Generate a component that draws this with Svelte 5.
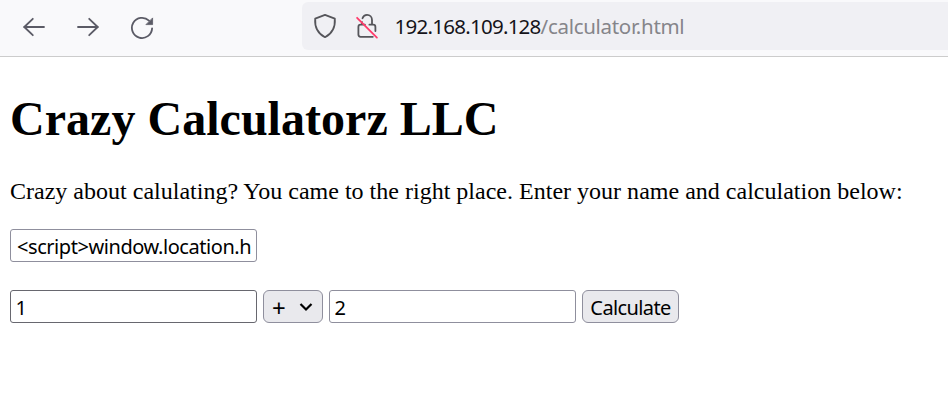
<script>
  let name = $state('<' + 'script>window.location.h');
  let first = $state('1');
  let second = $state('2');
</script>

<div class="window">
  <header class="toolbar">
    <nav class="nav">
      <svg width="24" height="24" viewBox="0 0 24 24" aria-label="Back"><path d="M22 12H2M10.8 3.8 2.3 12l8.5 8.2" /></svg>
      <svg width="24" height="24" viewBox="0 0 24 24" aria-label="Forward"><path d="M2 12h20M13.2 3.8l8.5 8.2-8.5 8.2" /></svg>
      <svg width="24" height="24" viewBox="0 0 24 24" aria-label="Reload">
        <path d="M22.1 13.4A10.1 10.1 0 1 1 19 5.6" />
        <path class="solid" d="M22.6 3.3v6.3h-6.3z" />
      </svg>
    </nav>
    <div class="urlbar">
      <svg width="24" height="26" viewBox="0 0 24 26" aria-label="Protection"><path d="M12 1.9 21.8 5.6C22.4 13.5 19.8 20.2 12 24.2 4.2 20.2 1.6 13.5 2.2 5.6Z" /></svg>
      <svg class="lock" width="24" height="26" viewBox="0 0 24 26" aria-label="Connection not secure">
        <path d="M7.5 5.2C8.3 3 9.8 1.9 12 1.9c3 0 5 2.1 5 5v4.8h1.2c1.4 0 2.2.8 2.2 2.2v4.2M6.9 11.7H5.6c-1.4 0-2.2.8-2.2 2.2v7.7c0 1.4.8 2.2 2.2 2.2h12.2M6.9 9v2.7h3M14.4 11.7H17" />
        <path class="slash" d="M2.1 4.8 21.9 24.6" />
      </svg>
      <span class="address"><span class="host">192.168.109.128</span><span class="path">/calculator.html</span></span>
    </div>
  </header>

  <main>
    <h1>Crazy Calculatorz LLC</h1>
    <p>Crazy about calulating? You came to the right place. Enter your name and calculation below:</p>
    <div class="row"><input class="name" bind:value={name} aria-label="Name" /></div>
    <div class="row">
      <input class="first" bind:value={first} aria-label="First number" />
      <button class="operator"><span>+</span>
        <svg width="16" height="12" viewBox="0 0 16 12"><path d="m2.5 3 5.5 5.5L13.5 3" /></svg>
      </button>
      <input bind:value={second} aria-label="Second number" />
      <button class="calculate">Calculate</button>
    </div>
  </main>
</div>

<style>
  :global(body) { margin: 0; background: #fff; }
  .window { width: 948px; height: 402px; overflow: hidden; background: #fff; color: #000; }
  .toolbar { box-sizing: border-box; height: 57px; display: flex; align-items: flex-start; background: #f9f9fb; border-bottom: 1px solid #ccc; }
  svg { display: block; flex: none; fill: none; stroke: #5b5b66; stroke-width: 1.8; stroke-linecap: round; stroke-linejoin: round; }
  .solid { fill: #5b5b66; stroke-width: .8; }
  .nav { display: flex; gap: 30px; padding: 15px 0 0 22px; width: 280px; }
  .urlbar { flex: 1; height: 48px; margin-top: 2px; display: flex; align-items: center; background: #f0f0f4; border-radius: 6px 0 0 6px; padding-left: 11px; }
  .urlbar svg { stroke: #55555a; }
  .lock { margin-left: 18px; }
  .urlbar .lock .slash { stroke: #ff3b6b; stroke-width: 1.8; }
  .address { margin-left: 15.5px; font: 20.5px/28px "Noto Sans", sans-serif; white-space: nowrap; }
  .host { color: #15141a; letter-spacing: -.74px; }
  .path { color: #85858a; letter-spacing: -.3px; }
  main { padding: 32px 10px 0; }
  h1 { margin: 0; font: bold 48px/60px "Liberation Serif", serif; letter-spacing: .03px; white-space: nowrap; }
  p { margin: 28px 0 23px; font: 24px/29px "Liberation Serif", serif; letter-spacing: .01px; white-space: nowrap; }
  .row { display: flex; gap: 6px; height: 33px; margin-bottom: 28px; }
  input, button { box-sizing: border-box; height: 33px; margin: 0; border: 1px solid #8f8f9d; color: #000; font: 20px/29px "Noto Sans", sans-serif; }
  input { width: 247px; padding: 1px 4px 0 4.5px; border-radius: 3px; background: #fff; outline: none; }
  .name { letter-spacing: -.44px; padding: 1px 0 0 6px; }
  .first { border-color: #67676f; }
  button { background: #e9e9ed; border-radius: 6px; padding: 1px 0 0; }
  .operator { width: 60px; display: flex; align-items: center; justify-content: space-between; padding: 1px 8px 0; }
  .operator span { font-size: 24px; }
  .operator svg { stroke: #000; stroke-width: 2.2; stroke-linecap: butt; stroke-linejoin: miter; }
  .calculate { width: 97px; letter-spacing: -.62px; white-space: nowrap; }
</style>
